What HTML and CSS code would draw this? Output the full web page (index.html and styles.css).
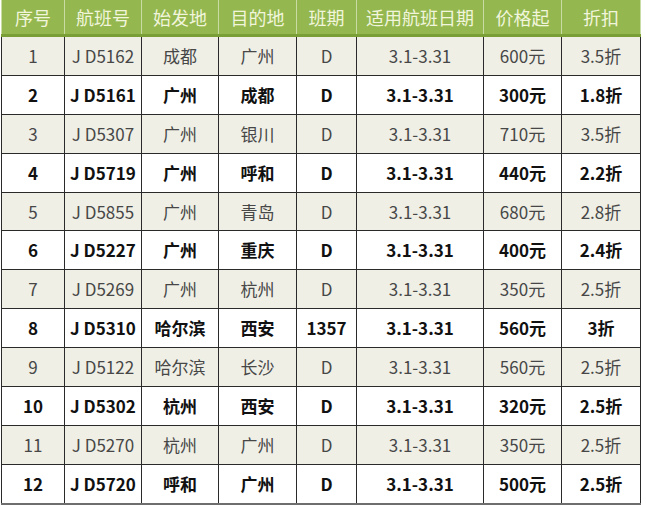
FILE: index.html
```html
<!DOCTYPE html>
<html lang="zh">
<head>
<meta charset="utf-8">
<link rel="stylesheet" href="styles.css">
</head>
<body>
<table class="flights">
  <colgroup>
    <col class="c-no"><col class="c-flight"><col class="c-from"><col class="c-to"><col class="c-sched"><col class="c-date"><col class="c-price"><col class="c-disc">
  </colgroup>
  <thead>
    <tr><th>序号</th><th>航班号</th><th>始发地</th><th>目的地</th><th>班期</th><th>适用航班日期</th><th>价格起</th><th>折扣</th></tr>
  </thead>
  <tbody>
    <tr class="odd"><td>1</td><td>J D5162</td><td>成都</td><td>广州</td><td>D</td><td>3.1-3.31</td><td>600元</td><td>3.5折</td></tr>
    <tr class="even"><td>2</td><td>J D5161</td><td>广州</td><td>成都</td><td>D</td><td>3.1-3.31</td><td>300元</td><td>1.8折</td></tr>
    <tr class="odd"><td>3</td><td>J D5307</td><td>广州</td><td>银川</td><td>D</td><td>3.1-3.31</td><td>710元</td><td>3.5折</td></tr>
    <tr class="even"><td>4</td><td>J D5719</td><td>广州</td><td>呼和</td><td>D</td><td>3.1-3.31</td><td>440元</td><td>2.2折</td></tr>
    <tr class="odd"><td>5</td><td>J D5855</td><td>广州</td><td>青岛</td><td>D</td><td>3.1-3.31</td><td>680元</td><td>2.8折</td></tr>
    <tr class="even"><td>6</td><td>J D5227</td><td>广州</td><td>重庆</td><td>D</td><td>3.1-3.31</td><td>400元</td><td>2.4折</td></tr>
    <tr class="odd"><td>7</td><td>J D5269</td><td>广州</td><td>杭州</td><td>D</td><td>3.1-3.31</td><td>350元</td><td>2.5折</td></tr>
    <tr class="even"><td>8</td><td>J D5310</td><td>哈尔滨</td><td>西安</td><td>1357</td><td>3.1-3.31</td><td>560元</td><td>3折</td></tr>
    <tr class="odd"><td>9</td><td>J D5122</td><td>哈尔滨</td><td>长沙</td><td>D</td><td>3.1-3.31</td><td>560元</td><td>2.5折</td></tr>
    <tr class="even"><td>10</td><td>J D5302</td><td>杭州</td><td>西安</td><td>D</td><td>3.1-3.31</td><td>320元</td><td>2.5折</td></tr>
    <tr class="odd"><td>11</td><td>J D5270</td><td>杭州</td><td>广州</td><td>D</td><td>3.1-3.31</td><td>350元</td><td>2.5折</td></tr>
    <tr class="even last"><td>12</td><td>J D5720</td><td>呼和</td><td>广州</td><td>D</td><td>3.1-3.31</td><td>500元</td><td>2.5折</td></tr>
  </tbody>
</table>
</body>
</html>
```

FILE: styles.css
```css
html, body {
  margin: 0;
  padding: 0;
  background: #ffffff;
}
body {
  padding: 0 6px 0 1px;
  font-family: "Noto Sans CJK SC", "Noto Sans", sans-serif;
}
.flights {
  border-collapse: collapse;
  table-layout: fixed;
  width: 639px;
  font-size: 17px;
}
.c-no { width: 63px; }
.c-flight { width: 77px; }
.c-from { width: 77px; }
.c-to { width: 78px; }
.c-sched { width: 60px; }
.c-date { width: 127px; }
.c-price { width: 78px; }
.c-disc { width: 79px; }

.flights th {
  height: 34px;
  padding: 0;
  background: #94b84f;
  color: #f1f5dc;
  font-weight: normal;
  font-size: 18px;
  border-left: 1px solid #c9dca4;
  border-right: 1px solid #c9dca4;
  border-bottom: 3px solid #7a9f37;
  text-align: center;
  vertical-align: middle;
  line-height: 20px;
}
.flights td {
  height: 37.9px;
  padding: 0;
  border: 1px solid #2a2a2a;
  text-align: center;
  vertical-align: middle;
  line-height: 20px;
}
.flights tr.odd td {
  background: #efefe6;
  color: #474747;
}
.flights tr.even td {
  background: #ffffff;
  color: #111;
  font-weight: bold;
}
.flights tr.last td {
  border-bottom: 3px solid #6e6e6e;
}
```
